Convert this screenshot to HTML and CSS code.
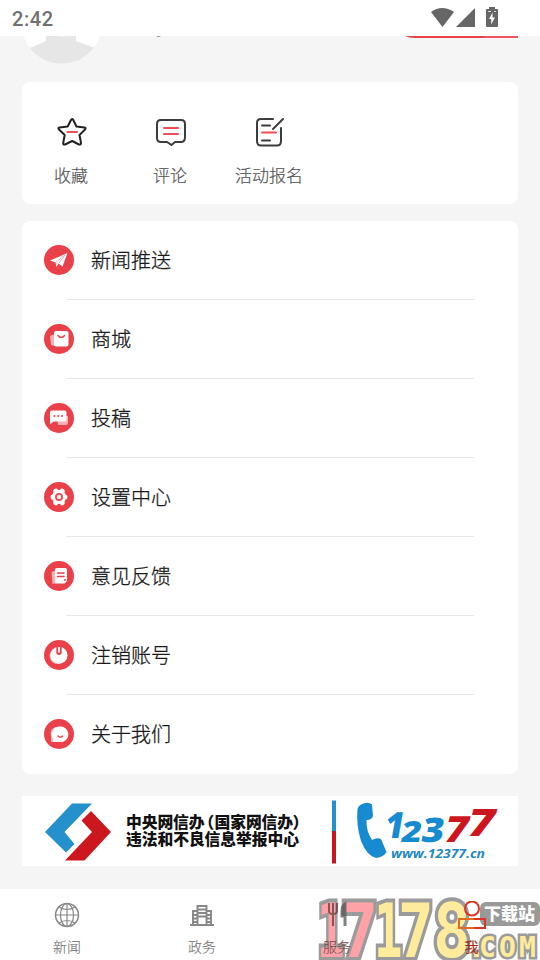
FILE: index.html
```html
<!DOCTYPE html>
<html lang="zh-CN">
<head>
<meta charset="utf-8">
<title>我</title>
<link rel="stylesheet" href="styles.css">
</head>
<body>
<div class="phone">
  <header class="status">
    <span class="clock">2:42</span>
    <svg class="signals" width="70" height="22" viewBox="430 6 70 22" fill="#666">
      <path d="M431 12Q442 4 454 12L442.500 27Z"/>
      <path d="M475 8V27H456Z"/>
      <path d="M489 7h6v2h2q1 0 1 1v16q0 1-1 1h-10q-1 0-1-1V10q0-1 1-1h2Z"/>
      <path fill="#fff" d="M492.500 12.500l-3.500 6.500h2.200v5.500l3.800-7h-2.500ZM488 11h3v.7h-3zM494 11h2v.7h-2z"/>
    </svg>
  </header>
  <main class="content">
    <section class="profile">
      <svg width="540" height="46" viewBox="0 36 540 46">
        <circle cx="62" cy="24" r="40" fill="#fff"/>
        <path fill="#e6e6e6" d="M30 48L46 41V36H58Q62 37 66 36H76V41L94 47.500A40 40 0 0 1 30 48Z"/>
        <path fill="#888" d="M157 36h4q-1 1-4 1Z"/>
        <path fill="#e84049" d="M405 36H518V38H415Q409 38 405 36Z"/>
        <path fill="#f05261" d="M485 36H518V38H483Z"/>
      </svg>
    </section>
    <section class="card shortcuts">
      <div class="shortcut">
        <svg width="32" height="32" viewBox="0 0 32 32" fill="none" stroke="#222" stroke-width="2" stroke-linejoin="round">
          <path d="M15 4Q16 2 17.300 4L20.500 10.500L28.500 11.500Q30.500 12 29 13.500L23.500 19L25 27Q25 29 23 28.500L16.200 25L9 28.500Q7 29 7.200 27L8.700 19L3 13.500Q1.500 12 3.500 11.500L11.700 10.500Z"/>
          <path stroke="#f34b57" stroke-linecap="round" d="M11.500 16h9.500"/>
        </svg>
        <span>收藏</span>
      </div>
      <div class="shortcut">
        <svg width="32" height="32" viewBox="0 0 32 32" fill="none" stroke="#3c3c3c" stroke-width="2" stroke-linejoin="round" stroke-linecap="round">
          <path d="M6 4H26Q30 4 30 8V21Q30 26 26 26H20L16.500 29L12 26H6Q2 26 2 22V8Q2 4 6 4Z"/>
          <path stroke="#f34b57" d="M9 12h14M9 18h14"/>
        </svg>
        <span>评论</span>
      </div>
      <div class="shortcut">
        <svg width="32" height="32" viewBox="0 0 32 32" fill="none" stroke="#3c3c3c" stroke-width="2" stroke-linejoin="round" stroke-linecap="round">
          <path d="M19 3H7Q3 3 3 7V25Q3 29.500 7 29.500H23Q27 29.500 27 25V12M19 13L29 3M8 9.500h8M8 24.500h8"/>
          <path stroke="#f34b57" d="M8 16.500h14"/>
        </svg>
        <span>活动报名</span>
      </div>
    </section>
    <section class="card menu">
      <div class="item">
        <svg class="badge" viewBox="0 0 30 30"><circle cx="15" cy="15" r="15"/><path class="w" d="M23.500 8L18.500 21.500L14.500 18.500L12.500 22L11.500 17.500L6 15.500Z"/><path class="line" d="M11.500 17.500L21 10L14.500 18.500"/></svg>
        <span>新闻推送</span>
      </div>
      <div class="item">
        <svg class="badge" viewBox="0 0 30 30"><circle cx="15" cy="15" r="15"/><path class="ghost" d="M6 12l5-2v12l-4-1Z"/><rect class="w" x="10" y="7" width="14.500" height="15.500" rx="2"/><path class="mark" d="M14 11.500q3.300 4 6.600 0"/></svg>
        <span>商城</span>
      </div>
      <div class="item">
        <svg class="badge" viewBox="0 0 30 30"><circle cx="15" cy="15" r="15"/><path class="ghost" d="M13 13h11v7l-1 2H14Z"/><path class="w" d="M8 7.500H20.500Q22.500 7.500 22.500 9.500V16.500Q22.500 18.500 20.500 18.500H10L6 21V9.500Q6 7.500 8 7.500Z"/><path class="mark dots" d="M10.500 13h0M14.300 13h0M18 13h0"/></svg>
        <span>投稿</span>
      </div>
      <div class="item">
        <svg class="badge" viewBox="0 0 30 30"><circle cx="15" cy="15" r="15"/><circle cx="15" cy="15" r="7" class="w"/><path stroke="#fff" stroke-width="5" stroke-linecap="round" d="M11.800 9.200l6.400 11.600M18.200 9.200l-6.400 11.600M9 15h12"/><circle cx="15" cy="15" r="3.100" fill="#ffe8e9" stroke="#e94751" stroke-width="1.700"/></svg>
        <span>设置中心</span>
      </div>
      <div class="item">
        <svg class="badge" viewBox="0 0 30 30"><circle cx="15" cy="15" r="15"/><path class="ghost" d="M7.500 11l5-2v13l-4 1Z"/><path class="w" d="M12.500 7H21Q23 7 23 9V20L20.500 22.500H11V9Q11 7 12.500 7Z"/><path class="mark" d="M13.500 12h6.500M13.500 15.500h6.500M20.500 19h1"/></svg>
        <span>意见反馈</span>
      </div>
      <div class="item">
        <svg class="badge" viewBox="0 0 30 30"><circle cx="15" cy="15" r="15"/><circle cx="13.500" cy="16" r="8" class="ghost"/><circle class="w" cx="15" cy="15.300" r="8.500"/><path d="M12.300 6.500V12q0 3 2.700 3t2.700-3V6.500Z" fill="#e9404a"/><path d="M15 7v5.500" stroke="#fff" stroke-width="1.800"/></svg>
        <span>注销账号</span>
      </div>
      <div class="item">
        <svg class="badge" viewBox="0 0 30 30"><circle cx="15" cy="15" r="15"/><path class="ghost" d="M12 8Q5 10 7 17V23H13Z"/><path class="w" d="M16 7.500A7.800 7.800 0 1 1 15.500 23H9.500Q8 22 9 20A8 8 0 0 1 16 7.500Z"/><path class="mark" d="M14 17q2.300 2.500 4.600 0"/></svg>
        <span>关于我们</span>
      </div>
    </section>
    <section class="report">
      <svg width="496" height="70" viewBox="22 796 496 70">
        <path fill="#2490cc" d="M72 803.500H92L64.500 832L74.500 844L66 852.500L45 832Z"/>
        <path fill="#cb171d" d="M91 811L111 832L84.500 860.500H65L92 832L81.500 820.500Z"/>
        <text class="cn" y="827.500" x="126 141.700 157.400 173.100 188.800 198.500 214.500 230.200 245.900 261.600 277.300 292.500">中央网信办（国家网信办）</text>
        <text class="cn" x="126" y="845" textLength="173">违法和不良信息举报中心</text>
        <path fill="#2490cc" d="M332 800.500h4V831h-4z"/><path fill="#c4181d" d="M332 831h4v32.500h-4z"/>
        <path fill="#168bd0" d="M361 804.500Q368 801 372 804.500L373 816Q372 820 366.500 820Q366 831 372 840Q377 837 381 839L386.500 852Q384 857 376 858Q367 856 361 841Q356 825 357.500 809Q358 806 361 804.500Z"/>
        <g class="hot">
          <text transform="translate(383 838) skewX(-10) scale(.92 1)" font-size="36">1</text>
          <text transform="translate(400 842) skewX(-10) scale(1.180 1)" font-size="29">2</text>
          <text transform="translate(420 842) skewX(-10) scale(1.130 1)" font-size="34">3</text>
          <g fill="#cb171d"><text transform="translate(442 842) skewX(-14) scale(1.120 1)" font-size="36">7</text><text transform="translate(465 836) skewX(-14) scale(1.220 1)" font-size="38">7</text></g>
        </g>
        <text class="web" x="391" y="858" textLength="94" lengthAdjust="spacingAndGlyphs">www.12377.cn</text>
      </svg>
    </section>
  </main>
  <nav class="tabs">
    <svg class="watermark" width="225" height="71" viewBox="315 889 225 71">
      <g class="digits">
        <text class="pink" transform="translate(317 957) scale(.620 1)">1</text><text class="pink" transform="translate(341 957) scale(.830 1)">7</text><text transform="translate(374 957) scale(.640 1)">1</text><text transform="translate(398 957) scale(.800 1)">7</text><text transform="translate(433 957) scale(.850 1)">8</text>
      </g>
      <text class="com" x="468 479 499 519" y="957">.COM</text>
      <rect x="480" y="902" width="60" height="24" rx="6" fill="#999"/>
      <text class="site" x="484" y="920" textLength="51">下载站</text>
    </svg>
    <div class="tab">
      <svg width="28" height="28" viewBox="0 0 28 28" fill="none" stroke="#888" stroke-width="1.200"><circle cx="14" cy="14" r="11.500" stroke-width="1.500"/><ellipse cx="14" cy="14" rx="6.500" ry="11.500"/><path d="M14 2.500v23M2.500 14h23M6 6q8 5 16 0M6 22q8-5 16 0"/></svg>
      <span>新闻</span>
    </div>
    <div class="tab">
      <svg width="28" height="28" viewBox="0 0 28 28" fill="none" stroke="#888" stroke-width="1.900"><path d="M2 24h24M5 24V10H9M23 24V10H19M9.500 24V5h9v19M9 8.500h10M9 12h10M9 15.500h10M4 14h5M4 17.500h5M4 21h5M19 14h5M19 17.500h5M19 21h5"/></svg>
      <span>政务</span>
    </div>
    <div class="tab serve">
      <svg width="28" height="28" viewBox="0 0 28 28" fill="none" stroke="#6b3438" stroke-opacity=".75" stroke-width="2"><path d="M6 2v8q0 3 4 3t4-3V2M10 2v23"/><path stroke="#555" stroke-width="3" d="M22 25V3q-3 2-3 7v5h3"/></svg>
      <span>服务</span>
    </div>
    <div class="tab active">
      <svg width="28" height="28" viewBox="0 0 28 28" fill="none" stroke="#dc3425" stroke-width="2"><circle cx="14" cy="7.500" r="7"/><path d="M16 18H27V27H16"/><path stroke="#df6a21" d="M16 18H1V27H16"/></svg>
      <span>我</span>
    </div>
  </nav>
</div>
</body>
</html>
```

FILE: styles.css
```css
* { box-sizing: border-box; }
body { margin: 0; background: #f5f5f5; font-family: "Noto Sans CJK SC", sans-serif; }
svg { display: block; flex: none; }
.phone { width: 540px; height: 960px; overflow: hidden; display: flex; flex-direction: column; }
.status { height: 36px; background: #fff; display: flex; align-items: center; justify-content: space-between; padding: 0 40px 2px 12px; flex: none; }
.clock { font: 500 20px/24px Roboto, sans-serif; color: #707070; letter-spacing: .6px; padding-top: 4px; }
.content { flex: 1; min-height: 0; }
.profile { height: 46px; }
.card { margin: 0 22px; background: #fff; border-radius: 8px; }
.shortcuts { height: 122px; display: flex; padding-top: 34px; }
.shortcut { width: 99px; display: flex; flex-direction: column; align-items: center; gap: 14px; color: #555; font-size: 17px; font-weight: 300; -webkit-text-stroke: .2px; line-height: 26px; white-space: nowrap; }
.shortcut span { margin-right: 1px; }
.menu { margin-top: 17px; height: 553px; }
.item { position: relative; height: 79px; display: flex; align-items: center; gap: 17px; padding: 0 0 1px 22px; color: #1a1a1a; font-size: 20px; font-weight: 300; -webkit-text-stroke: .3px; line-height: 30px; }
.item:not(:last-child)::after { content: ""; position: absolute; left: 44px; right: 44px; bottom: 0; height: 1px; background: #e8e8e8; }
.badge { width: 30px; height: 30px; fill: #e9404a; }
.badge .w { fill: #fff; }
.badge .ghost { fill: #f8b0b4; }
.badge .line { fill: none; stroke: #f49ba0; stroke-width: .8; }
.badge .mark { fill: none; stroke: #e9404a; stroke-width: 1.5; stroke-linecap: round; }
.badge .dots { stroke-width: 2; }
.report { margin: 22px 22px 0; height: 70px; background: #fff; }
.cn { font-size: 15.8px; font-weight: 900; fill: #111; }
.hot { font-family: "Open Sans", sans-serif; font-weight: 800; fill: #168bd0; }
.web { font: italic 700 13px "Open Sans", sans-serif; fill: #2589bd; }
.tabs { position: relative; height: 71px; background: #fff; display: flex; flex: none; }
.tab { position: relative; width: 135px; display: flex; flex-direction: column; align-items: center; padding: 12px 1px 0 0; gap: 7px; font-size: 14px; font-weight: 300; -webkit-text-stroke: .15px; line-height: 20px; color: #777; }
.serve { color: #76504c; }
.active { color: #a52c22; padding-right: 2px; font-weight: 400; }
.watermark { position: absolute; right: 0; bottom: 0; }
.digits { font: 700 74px "DejaVu Sans Mono", monospace; fill: #ffeb9c; stroke: #9b9b9b; stroke-width: 8px; paint-order: stroke; stroke-linejoin: miter; }
.pink { fill: #ffa2a8; }
.com { font: 700 28px "DejaVu Sans Mono", monospace; fill: #ffeb9c; stroke: #9b9b9b; stroke-width: 5px; paint-order: stroke; }
.site { font-size: 17px; font-weight: 900; fill: #fff; }
```
